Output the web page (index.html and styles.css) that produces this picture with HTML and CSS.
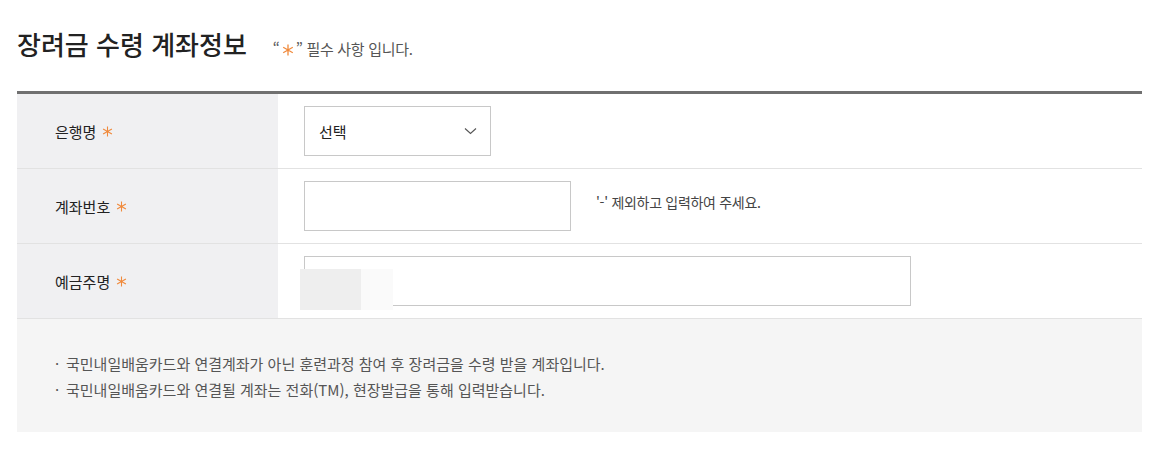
FILE: index.html
```html
<!DOCTYPE html>
<html lang="ko">
<head>
    <meta charset="utf-8">
    <title>장려금 수령 계좌정보</title>
    <link rel="stylesheet" href="styles.css">
</head>
<body>

<section id="content">
    <!-- title row -->
    <div class="titleRow">
        <h2 class="pageTitle">장려금 수령 계좌정보</h2>
        <p class="reqInfo">&ldquo;<svg class="star bigStar" viewBox="0 0 12 12"><path d="M6 0.5V11.5M1.2 3.25L10.8 8.75M1.2 8.75L10.8 3.25" stroke="#f08a3c" stroke-width="1.3" fill="none"/></svg>&rdquo; 필수 사항 입니다.</p>
    </div>

    <!-- account form -->
    <div class="formTable">
        <div class="formRow">
            <div class="formLabel">은행명 <svg class="star" viewBox="0 0 12 12"><path d="M6 0.5V11.5M1.2 3.25L10.8 8.75M1.2 8.75L10.8 3.25" stroke="#f08a3c" stroke-width="1.2" fill="none"/></svg></div>
            <div class="formField">
                <div class="selectBox">
                    <span>선택</span>
                    <svg class="arrow" width="13" height="8" viewBox="0 0 13 8"><path d="M1 1.5 L6.5 6.5 L12 1.5" fill="none" stroke="#555" stroke-width="1.1"/></svg>
                </div>
            </div>
        </div>
        <div class="formRow">
            <div class="formLabel">계좌번호 <svg class="star" viewBox="0 0 12 12"><path d="M6 0.5V11.5M1.2 3.25L10.8 8.75M1.2 8.75L10.8 3.25" stroke="#f08a3c" stroke-width="1.2" fill="none"/></svg></div>
            <div class="formField">
                <input type="text" class="txtAccount">
                <span class="hint">'-' 제외하고 입력하여 주세요.</span>
            </div>
        </div>
        <div class="formRow">
            <div class="formLabel">예금주명 <svg class="star" viewBox="0 0 12 12"><path d="M6 0.5V11.5M1.2 3.25L10.8 8.75M1.2 8.75L10.8 3.25" stroke="#f08a3c" stroke-width="1.2" fill="none"/></svg></div>
            <div class="formField">
                <div class="nameWrap">
                    <input type="text" class="txtName">
                    <!-- masked value -->
                    <span class="mask"></span>
                </div>
            </div>
        </div>
    </div>

    <!-- notes -->
    <ul class="noteBox">
        <li>국민내일배움카드와 연결계좌가 아닌 훈련과정 참여 후 장려금을 수령 받을 계좌입니다.</li>
        <li>국민내일배움카드와 연결될 계좌는 전화(TM), 현장발급을 통해 입력받습니다.</li>
    </ul>
</section>

</body>
</html>
```

FILE: styles.css
```css
body {
    margin: 0;
    background: #fff;
    font-family: "Noto Sans CJK KR", "Noto Sans", sans-serif;
    color: #222;
}

#content {
    width: 1125px;
    margin: 0 0 0 17px;
}

/* title */
.titleRow {
    display: flex;
    align-items: baseline;
    height: 91px;
    padding-top: 25px;
    box-sizing: border-box;
}

.pageTitle {
    margin: 0;
    font-size: 26px;
    font-weight: 500;
    color: #222;
}

.reqInfo {
    margin: 0 0 0 26px;
    font-size: 15px;
    color: #555;
    letter-spacing: -0.3px;
}

/* orange required mark */
.star {
    width: 11px;
    height: 11px;
    margin-left: 6px;
}

.reqInfo .bigStar {
    width: 12px;
    height: 12px;
    margin: 0 2px;
    vertical-align: -1px;
}

/* form table */
.formTable {
    border-top: 3px solid #707070;
}

.formRow {
    display: flex;
    height: 74px;
    border-bottom: 1px solid #e2e2e2;
}

.formLabel {
    width: 261px;
    background: #f0f0f2;
    display: flex;
    align-items: center;
    padding-left: 38px;
    box-sizing: border-box;
    font-size: 15px;
    color: #222;
}

.formField {
    flex: 1;
    display: flex;
    align-items: center;
    padding-left: 26px;
}

.selectBox {
    width: 187px;
    height: 50px;
    border: 1px solid #c8c8c8;
    box-sizing: border-box;
    display: flex;
    align-items: center;
    justify-content: space-between;
    padding: 0 13px 0 14px;
    font-size: 15px;
    color: #222;
}

input {
    height: 50px;
    border: 1px solid #c8c8c8;
    box-sizing: border-box;
    margin: 0;
    padding: 0 14px;
}

.txtAccount {
    width: 267px;
}

.hint {
    margin-left: 25px;
    margin-top: -8px;
    font-size: 14px;
    color: #444;
    letter-spacing: -0.3px;
}

.nameWrap {
    position: relative;
}

.txtName {
    width: 607px;
    display: block;
}

/* grey masking block over the input */
.mask {
    position: absolute;
    left: -4px;
    top: 13px;
    width: 93px;
    height: 41px;
    background: linear-gradient(to right, #eeeeee 61px, #fafafa 61px);
}

/* notes */
.noteBox {
    list-style: none;
    margin: 0;
    background: #f5f5f5;
    height: 113px;
    box-sizing: border-box;
    padding: 32px 0 0 38px;
    font-size: 15px;
    color: #555;
}

.noteBox li {
    line-height: 26px;
    padding-left: 11px;
    position: relative;
}

.noteBox li::before {
    content: "·";
    position: absolute;
    left: 0;
    top: 0;
}
```
